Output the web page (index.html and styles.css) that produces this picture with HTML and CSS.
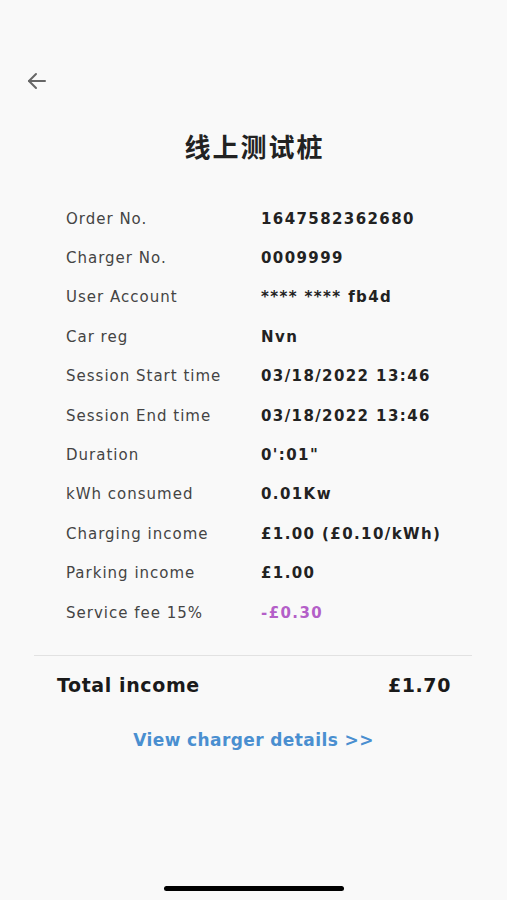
FILE: index.html
```html
<!DOCTYPE html>
<html lang="en">
<head>
  <meta charset="UTF-8">
  <meta name="viewport" content="width=device-width, initial-scale=1.0">
  <title>线上测试桩</title>
  <link rel="stylesheet" href="styles.css">
</head>
<body>
  <div class="screen">
    <div class="status-bar"></div>

    <div class="nav">
      <button class="back" aria-label="Back">
        <svg width="24" height="24" viewBox="0 0 24 24" fill="none" stroke="#666" stroke-width="2" stroke-linecap="round" stroke-linejoin="round">
          <path d="M20 12H4"/>
          <path d="M11 5l-7 7 7 7"/>
        </svg>
      </button>
    </div>

    <h1 class="title">线上测试桩</h1>

    <div class="details">
      <div class="row"><span class="label">Order No.</span><span class="value">1647582362680</span></div>
      <div class="row"><span class="label">Charger No.</span><span class="value">0009999</span></div>
      <div class="row"><span class="label">User Account</span><span class="value">**** **** fb4d</span></div>
      <div class="row"><span class="label">Car reg</span><span class="value">Nvn</span></div>
      <div class="row"><span class="label">Session Start time</span><span class="value">03/18/2022 13:46</span></div>
      <div class="row"><span class="label">Session End time</span><span class="value">03/18/2022 13:46</span></div>
      <div class="row"><span class="label">Duration</span><span class="value">0':01"</span></div>
      <div class="row"><span class="label">kWh consumed</span><span class="value">0.01Kw</span></div>
      <div class="row"><span class="label">Charging income</span><span class="value">£1.00 (£0.10/kWh)</span></div>
      <div class="row"><span class="label">Parking income</span><span class="value">£1.00</span></div>
      <div class="row"><span class="label">Service fee 15%</span><span class="value fee">-£0.30</span></div>
    </div>

    <div class="total">
      <span>Total income</span>
      <span>£1.70</span>
    </div>

    <a class="link" href="#">View charger details &gt;&gt;</a>

    <div class="home-bar"></div>
  </div>
</body>
</html>
```

FILE: styles.css
```css
body {
  margin: 0;
  background: #f9f9f9;
  font-family: 'DejaVu Sans', 'Noto Sans CJK SC', sans-serif;
  color: #222;
}

.screen {
  width: 507px;
  height: 900px;
  display: flex;
  flex-direction: column;
}

.status-bar {
  height: 54px;
}

.nav {
  height: 54px;
  padding-left: 25px;
  display: flex;
  align-items: center;
}

.back {
  background: none;
  border: none;
  padding: 0;
  width: 24px;
  height: 24px;
  cursor: pointer;
}

.title {
  margin: 22px 0 0 2px;
  text-align: center;
  font-family: 'Noto Sans CJK SC', sans-serif;
  font-size: 26px;
  font-weight: bold;
  letter-spacing: 2px;
  color: #222;
  line-height: 32px;
}

.details {
  margin: 37px 35px 0 34px;
  padding: 0 0 23px 32px;
  border-bottom: 1px solid #e2e2e2;
}

.row {
  display: flex;
  height: 39.4px;
  align-items: center;
  font-size: 15px;
}

.label {
  width: 195px;
  color: #444;
  letter-spacing: 1px;
}

.value {
  font-weight: bold;
  color: #222;
  letter-spacing: 1.4px;
}

.value.fee {
  color: #b45fc8;
}

.total {
  display: flex;
  justify-content: space-between;
  padding: 0 56px 0 57px;
  margin-top: 18px;
  font-size: 19px;
  font-weight: bold;
  letter-spacing: 0.6px;
  color: #1a1a1a;
}

.link {
  margin-top: 34px;
  align-self: center;
  font-size: 17px;
  font-weight: bold;
  letter-spacing: 0.4px;
  color: #4a8fd0;
  text-decoration: none;
}

.home-bar {
  margin-top: auto;
  margin-bottom: 9px;
  align-self: center;
  width: 180px;
  height: 5px;
  border-radius: 3px;
  background: #000;
}
```
